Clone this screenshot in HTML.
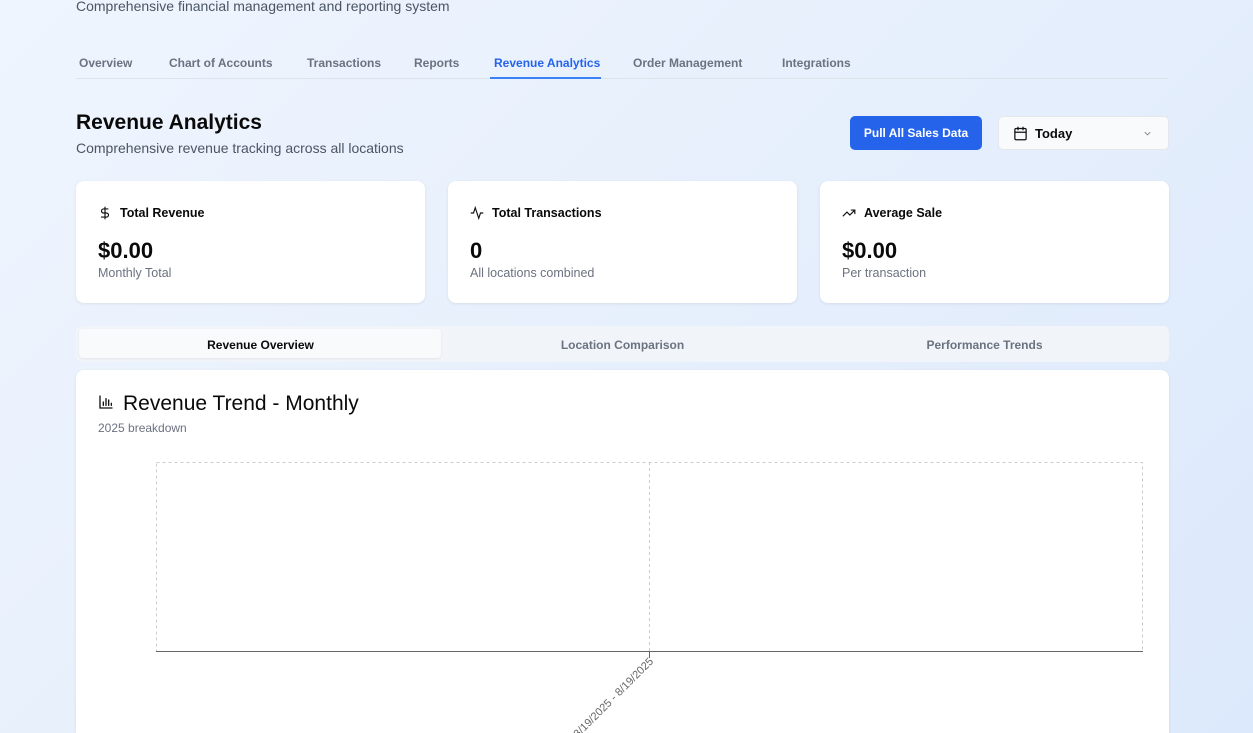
<!DOCTYPE html>
<html style="width:1253px;height:733px;overflow:hidden"><head><meta charset="utf-8"><style>
*{box-sizing:border-box;margin:0;padding:0}
body{width:1253px;height:733px;overflow:hidden;font-family:"Liberation Sans",sans-serif;background:linear-gradient(135deg,#eff5fe 0%,#e6effc 50%,#dce9fc 100%);position:relative;color:#0a0a0a}
.a{position:absolute}
.sub{left:76px;top:-2px;font-size:14px;color:#4b5563}
.tabs{left:76px;top:48px;width:1093px;height:31px;border-bottom:1px solid #dde3ea}
.tab{position:absolute;top:8px;font-size:12px;font-weight:bold;color:#6b7280}
.card{background:#fff;border-radius:8px;box-shadow:0 1px 3px rgba(0,0,0,.08);}
.ct{font-size:12.5px;font-weight:bold;position:absolute;left:44px;top:25px}
.cv{font-size:22px;font-weight:bold;position:absolute;left:22px;top:57px}
.cs{font-size:12.5px;color:#6b7280;position:absolute;left:22px;top:85px}
.ic{position:absolute;left:22px;top:25px}
</style></head><body>
<div class="a sub">Comprehensive financial management and reporting system</div>
<div class="a tabs">
<span class="tab" style="left:3px">Overview</span>
<span class="tab" style="left:93px">Chart of Accounts</span>
<span class="tab" style="left:231px">Transactions</span>
<span class="tab" style="left:338px">Reports</span>
<span class="tab" style="left:418px;color:#2563eb">Revenue Analytics</span>
<span class="tab" style="left:557px">Order Management</span>
<span class="tab" style="left:706px">Integrations</span>
<div class="a" style="left:414px;top:29px;width:111px;height:2px;background:#3b82f6"></div>
</div>
<div class="a" style="left:76px;top:111px;font-size:21px;font-weight:bold">Revenue Analytics</div>
<div class="a" style="left:76px;top:140px;font-size:14px;color:#4b5563">Comprehensive revenue tracking across all locations</div>
<div class="a" style="left:850px;top:116px;width:132px;height:34px;background:#2563eb;border-radius:5px;color:#fff;font-size:12px;font-weight:bold;text-align:center;line-height:34px">Pull All Sales Data</div>
<div class="a" style="left:998px;top:116px;width:171px;height:34px;background:#f8fafc;border:1px solid #e5e7eb;border-radius:5px">
<svg class="a" style="left:14px;top:9px" width="15" height="15" viewBox="0 0 24 24" fill="none" stroke="#111" stroke-width="2" stroke-linecap="round"><rect x="3" y="4" width="18" height="18" rx="2"/><path d="M16 2v4M8 2v4M3 10h18"/></svg>
<span class="a" style="left:36px;top:9px;font-size:13px;font-weight:bold">Today</span>
<svg class="a" style="left:143px;top:11px" width="11" height="11" viewBox="0 0 24 24" fill="none" stroke="#888" stroke-width="2"><path d="M6 9l6 6 6-6"/></svg>
</div>
<div class="a card" style="left:76px;top:181px;width:349px;height:122px">
<svg class="ic" width="14" height="14" viewBox="0 0 24 24" fill="none" stroke="#111" stroke-width="2" stroke-linecap="round"><path d="M12 2v20M17 5H9.5a3.5 3.5 0 0 0 0 7h5a3.5 3.5 0 0 1 0 7H6"/></svg>
<span class="ct">Total Revenue</span><span class="cv">$0.00</span><span class="cs">Monthly Total</span></div>
<div class="a card" style="left:448px;top:181px;width:349px;height:122px">
<svg class="ic" width="14" height="14" viewBox="0 0 24 24" fill="none" stroke="#111" stroke-width="2" stroke-linecap="round"><path d="M22 12h-4l-3 9L9 3l-3 9H2"/></svg>
<span class="ct">Total Transactions</span><span class="cv">0</span><span class="cs">All locations combined</span></div>
<div class="a card" style="left:820px;top:181px;width:349px;height:122px">
<svg class="ic" width="14" height="14" viewBox="0 0 24 24" fill="none" stroke="#111" stroke-width="2" stroke-linecap="round"><path d="M22 7l-8.5 8.5-5-5L2 17M16 7h6v6"/></svg>
<span class="ct">Average Sale</span><span class="cv">$0.00</span><span class="cs">Per transaction</span></div>
<div class="a" style="left:76px;top:326px;width:1093px;height:36px;background:#f1f5f9;border-radius:6px">
<div class="a" style="left:3px;top:3px;width:362px;height:29px;background:#f8fafc;border-radius:4px;box-shadow:0 1px 2px rgba(0,0,0,.06)"></div>
<span class="a" style="left:0;width:369px;text-align:center;top:12px;font-size:12px;font-weight:bold">Revenue Overview</span>
<span class="a" style="left:362px;width:369px;text-align:center;top:12px;font-size:12px;font-weight:bold;color:#6b7280">Location Comparison</span>
<span class="a" style="left:724px;width:369px;text-align:center;top:12px;font-size:12px;font-weight:bold;color:#6b7280">Performance Trends</span>
</div>
<div class="a card" style="left:76px;top:370px;width:1093px;height:363px;border-radius:8px 8px 0 0;overflow:hidden">
<svg class="a" style="left:22px;top:24px" width="16" height="16" viewBox="0 0 24 24" fill="none" stroke="#111" stroke-width="2" stroke-linecap="round"><path d="M3 3v18h18M8 17v-5M12 17V7M16 17v-8M20 17v-3"/></svg>
<span class="a" style="left:47px;top:22px;font-size:21px">Revenue Trend - Monthly</span>
<span class="a" style="left:22px;top:51px;font-size:12px;color:#6b7280">2025 breakdown</span>
<svg class="a" style="left:0;top:0" width="1093" height="363">
<rect x="80.5" y="92.5" width="986" height="189" fill="none" stroke="#ccc" stroke-dasharray="3 3"/>
<line x1="573.5" y1="92" x2="573.5" y2="282" stroke="#ccc" stroke-dasharray="3 3"/>
<line x1="80" y1="281.5" x2="1067" y2="281.5" stroke="#666"/>
<line x1="573.5" y1="282" x2="573.5" y2="288" stroke="#666"/>
<text x="578" y="292" transform="rotate(-45 578 292)" text-anchor="end" font-size="11" fill="#666" font-family="Liberation Sans">8/19/2025 - 8/19/2025</text>
</svg>
</div>
</body></html>
